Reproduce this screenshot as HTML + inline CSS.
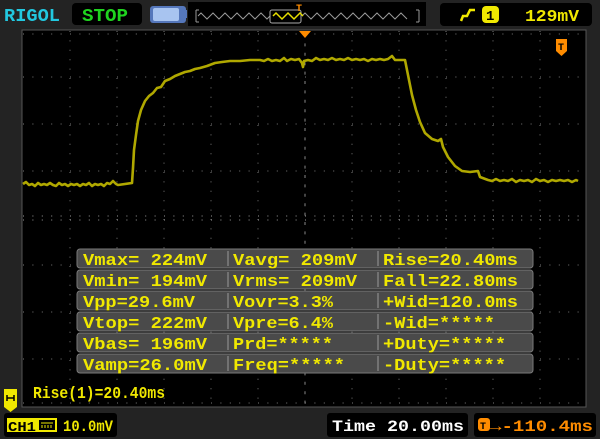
<!DOCTYPE html>
<html><head><meta charset="utf-8"><style>
html,body{margin:0;padding:0;background:#222;}
svg{display:block}
text{font-family:"Liberation Mono","DejaVu Sans Mono",monospace;font-weight:bold;}
</style></head><body>
<svg width="600" height="439" viewBox="0 0 600 439" xmlns="http://www.w3.org/2000/svg">
<rect width="600" height="439" fill="#232323"/>
<text x="4" y="21" font-size="18" fill="#22c8e0" textLength="56" lengthAdjust="spacingAndGlyphs" font-weight="normal">RIGOL</text>
<rect x="72" y="3" width="70" height="22" rx="4" fill="#000"/>
<text x="82" y="21" font-size="18" fill="#1fd41f" textLength="46" lengthAdjust="spacingAndGlyphs" font-weight="normal">STOP</text>
<rect x="150" y="6" width="36" height="17" rx="3" fill="#5577bb"/>
<rect x="153" y="8" width="26" height="13" rx="2" fill="#a8c4f0"/>
<rect x="183" y="10" width="4" height="8" fill="#5577bb"/>
<rect x="188" y="2" width="238" height="24" fill="#000"/>
<path d="M196 10 v12 M196 10 h3 M196 22 h3 M419 10 v12 M419 10 h-3 M419 22 h-3" stroke="#999" stroke-width="1" fill="none"/>
<path d="M198 16 l3 -3 l3 3 l3 3 l3 -3 l3 -3 l3 3 l3 3 l3 -3 l3 -3 l3 3 l3 3 l3 -3 l3 -3 l3 3 l3 3 l3 -3 l3 -3 l3 3 l3 3 l3 -3 l3 -3 l3 3 l3 3 l3 -3" stroke="#999" stroke-width="1" fill="none"/>
<path d="M302 16 l3 -3 l3 3 l3 3 l3 -3 l3 -3 l3 3 l3 3 l3 -3 l3 -3 l3 3 l3 3 l3 -3 l3 -3 l3 3 l3 3 l3 -3 l3 -3 l3 3 l3 3 l3 -3 l3 -3 l3 3 l3 3 l3 -3 l3 -3 l3 3 l3 3 l3 -3 l3 -3 l3 3 l3 3 l3 -3 l3 -3 l3 3 l3 3" stroke="#999" stroke-width="1" fill="none"/>
<rect x="270" y="10" width="31" height="13" rx="2" fill="#000" stroke="#aaa" stroke-width="1"/>
<path d="M273 16 l3 -3 l3 3 l3 3 l3 -3 l3 -3 l3 3 l3 3 l3 -3 l3 -3 l3 3" stroke="#e8e000" stroke-width="1.5" fill="none"/>
<text x="296" y="11" font-size="10" fill="#ff8c00">T</text>
<rect x="440" y="3" width="152" height="23" rx="4" fill="#000"/>
<path d="M461 21 l2 -5 h4 l3 -6 h5" stroke="#f0e800" stroke-width="2.5" fill="none"/>
<rect x="482" y="6" width="17" height="17" rx="4" fill="#f0e800"/>
<text x="486" y="20" font-size="14" fill="#000">1</text>
<text x="525" y="21" font-size="17" fill="#f0e800" textLength="54" lengthAdjust="spacingAndGlyphs" font-weight="normal">129mV</text>
<rect x="22" y="30" width="564" height="377" fill="#000" stroke="#555" stroke-width="1"/>
<g stroke="#777" stroke-width="1" stroke-dasharray="1 8.4">
<path d="M23 77 H585 M23 124 H585 M23 171 H585 M23 265 H585 M23 312 H585 M23 359 H585"/>
<path d="M70 31 V406 M117 31 V406 M164 31 V406 M211 31 V406 M258 31 V406 M352 31 V406 M399 31 V406 M446 31 V406 M493 31 V406 M540 31 V406"/>
</g>
<g stroke="#999" stroke-width="1" stroke-dasharray="1 8.4">
<path d="M23 216 H585 M23 220 H585"/>
</g>
<g stroke="#888" stroke-width="1" stroke-dasharray="3 6.4">
<path d="M305 34 V406"/>
</g>
<path d="M23 34 H585 M23 403 H585" stroke="#777" stroke-dasharray="1 8.4"/>
<path d="M299 31 h12 l-6 7 z" fill="#ff8c00"/>
<path d="M556 39 h11 v12 l-5.5 5 l-5.5 -5 z" fill="#ff8c00"/>
<text x="558" y="50" font-size="10" fill="#000">T</text>
<path fill="none" stroke="#b0a800" stroke-width="2.6" stroke-linejoin="round" d="M23 184 l3 -2 l3 3 l3 -1 l3 2 l3 -3 l3 2 l3 -1 l3 1 l3 -2 l3 2 l3 1 l3 -3 l3 2 l3 -1 l3 2 l3 -2 l3 1 l3 -1 l3 2 l3 -2 l3 1 l3 -2 l3 3 l3 -2 l3 1 l3 -1 l3 2 l3 -3 l3 1 l3 -3 l3 3 l2 1 L132 183 L133 168 L134 150 L136 135 L138 121 L141 110 L145 101 L149 96 L153 93 L157 88 L161 87 L165 81 L170 79 L175 76 L180 74 L185 72 L190 71 L195 69 L200 68 L207 66 L215 63 L222 62 L230 61 L240 61 L250 60 L260 60 l4 1 l4 -2 l4 2 l4 -1 l4 1 l4 -3 l3 3 l4 -2 l4 1 l4 -1 l3 4 l1 4 l1 -6 l4 -1 l4 1 l4 -3 l4 2 l4 -1 l4 1 l4 -2 l4 2 l4 -1 l4 1 l4 -2 l4 2 l4 -1 l4 1 l4 -1 l4 2 l4 -2 l4 1 l4 -1 l4 1 l4 -1 l4 -3 l3 4 L405 60 L408 75 L412 95 L416 110 L420 122 L425 133 L432 139 L438 141 L441 139 L443 147 L448 157 L455 166 L462 171 L470 172 L478 171 L480 177 L488 180 l4 1 l4 -2 l4 2 l4 -1 l4 1 l4 -2 l4 3 l4 -2 l4 1 l4 -1 l4 2 l4 -3 l4 2 l4 -1 l4 2 l4 -2 l4 1 l4 -1 l4 1 l4 -1 l4 2 l4 -2 l2 1"/>
<g font-size="17" fill="#f0e800">
<g fill="#4a4a4a" stroke="#7a7a7a" stroke-width="1">
<rect x="77" y="249" width="456" height="19" rx="3"/>
<rect x="77" y="270" width="456" height="19" rx="3"/>
<rect x="77" y="291" width="456" height="19" rx="3"/>
<rect x="77" y="312" width="456" height="19" rx="3"/>
<rect x="77" y="333" width="456" height="19" rx="3"/>
<rect x="77" y="354" width="456" height="19" rx="3"/>
</g>
<path d="M228 251 v15 M378 251 v15 M228 272 v15 M378 272 v15 M228 293 v15 M378 293 v15 M228 314 v15 M378 314 v15 M228 335 v15 M378 335 v15 M228 356 v15 M378 356 v15" stroke="#999" stroke-width="1"/>
<g font-weight="normal">
<text x="83" y="265" textLength="124" lengthAdjust="spacingAndGlyphs">Vmax= 224mV</text>
<text x="233" y="265" textLength="124" lengthAdjust="spacingAndGlyphs">Vavg= 209mV</text>
<text x="383" y="265" textLength="135" lengthAdjust="spacingAndGlyphs">Rise=20.40ms</text>
<text x="83" y="286" textLength="124" lengthAdjust="spacingAndGlyphs">Vmin= 194mV</text>
<text x="233" y="286" textLength="124" lengthAdjust="spacingAndGlyphs">Vrms= 209mV</text>
<text x="383" y="286" textLength="135" lengthAdjust="spacingAndGlyphs">Fall=22.80ms</text>
<text x="83" y="307" textLength="112" lengthAdjust="spacingAndGlyphs">Vpp=29.6mV</text>
<text x="233" y="307" textLength="100" lengthAdjust="spacingAndGlyphs">Vovr=3.3%</text>
<text x="383" y="307" textLength="135" lengthAdjust="spacingAndGlyphs">+Wid=120.0ms</text>
<text x="83" y="328" textLength="124" lengthAdjust="spacingAndGlyphs">Vtop= 222mV</text>
<text x="233" y="328" textLength="100" lengthAdjust="spacingAndGlyphs">Vpre=6.4%</text>
<text x="383" y="328" textLength="112" lengthAdjust="spacingAndGlyphs">-Wid=*****</text>
<text x="83" y="349" textLength="124" lengthAdjust="spacingAndGlyphs">Vbas= 196mV</text>
<text x="233" y="349" textLength="100" lengthAdjust="spacingAndGlyphs">Prd=*****</text>
<text x="383" y="349" textLength="123" lengthAdjust="spacingAndGlyphs">+Duty=*****</text>
<text x="83" y="370" textLength="124" lengthAdjust="spacingAndGlyphs">Vamp=26.0mV</text>
<text x="233" y="370" textLength="112" lengthAdjust="spacingAndGlyphs">Freq=*****</text>
<text x="383" y="370" textLength="123" lengthAdjust="spacingAndGlyphs">-Duty=*****</text>
<text x="33" y="398" textLength="132" lengthAdjust="spacingAndGlyphs">Rise(1)=20.40ms</text>
</g>
</g>
<path d="M4 389 h13 v18 l-6.5 5 l-6.5 -5 z" fill="#f0e800"/>
<path d="M7 398 h7 M7 395 v6 M14 395 v6" stroke="#000" stroke-width="1.5"/>
<rect x="4" y="413" width="113" height="24" rx="3" fill="#000"/>
<rect x="7" y="418" width="50" height="14" fill="#f0e800"/>
<text x="8" y="431" font-size="14" fill="#000" textLength="28" lengthAdjust="spacingAndGlyphs">CH1</text>
<rect x="39" y="420" width="16" height="10" fill="#000"/>
<path d="M41 423 h12 M42 425 v3 M45 425 v3 M48 425 v3 M51 425 v3" stroke="#f0e800" stroke-width="1"/>
<text x="63" y="431" font-size="16" fill="#f0e800" textLength="50" lengthAdjust="spacingAndGlyphs" font-weight="normal">10.0mV</text>
<rect x="327" y="413" width="141" height="24" rx="3" fill="#000"/>
<text x="332" y="431" font-size="16" fill="#fff" textLength="132" lengthAdjust="spacingAndGlyphs" font-weight="normal">Time 20.00ms</text>
<rect x="474" y="413" width="122" height="24" rx="3" fill="#000"/>
<rect x="478" y="418" width="12" height="13" rx="3" fill="#ff8c00"/>
<text x="480" y="429" font-size="10" fill="#000">T</text>
<text x="490" y="431" font-size="16" fill="#ff8c00" textLength="103" lengthAdjust="spacingAndGlyphs" font-weight="normal">→-110.4ms</text>
</svg>
</body></html>
